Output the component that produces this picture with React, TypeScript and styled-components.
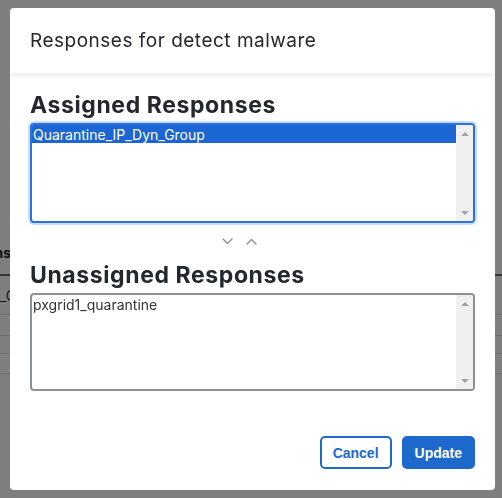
import React from 'react';
import styled, { createGlobalStyle } from 'styled-components';

const GlobalStyle = createGlobalStyle`
  html, body {
    margin: 0;
    padding: 0;
  }
  body {
    font-family: Inter, "Noto Sans", sans-serif;
    background: #ffffff;
  }
  * {
    box-sizing: border-box;
  }
`;

// page that sits behind the dialog
const Page = styled.div`
  width: 100vw;
  height: 100vh;
  overflow: hidden;
  padding-top: 236px;
`;

const TableHead = styled.div`
  display: flex;
  align-items: center;
  height: 40px;
  padding-bottom: 6px;
  border-bottom: 2px solid #666;
`;

const HeadCell = styled.div`
  width: 11px;
  display: flex;
  justify-content: flex-end;
  white-space: nowrap;
  font-size: 14px;
  font-weight: 700;
  color: #222;
`;

const TableRow = styled.div<{ $h: number }>`
  display: flex;
  align-items: center;
  height: ${(p) => p.$h}px;
  border-bottom: 1px solid #dcdcdc;
  font-size: 14px;
  color: #333;
  white-space: nowrap;
`;

const Overlay = styled.div`
  position: fixed;
  inset: 0;
  background: rgba(0, 0, 0, 0.5);
  display: flex;
  padding: 8px 7px 8px 10px;
`;

const Modal = styled.div`
  flex: 1;
  background: #fff;
  border-radius: 4px;
  display: flex;
  flex-direction: column;
  overflow: hidden;
`;

const Header = styled.div`
  position: relative;
  z-index: 1;
  height: 65px;
  padding: 0 20px;
  display: flex;
  align-items: center;
  font-size: 19px;
  letter-spacing: 0.5px;
  color: #23282e;
  box-shadow: 0 3px 6px rgba(0, 0, 0, 0.08);
`;

const Body = styled.div`
  flex: 1;
  display: flex;
  flex-direction: column;
  padding: 18px 20px 0;
`;

const SectionTitle = styled.h2`
  margin: 0 0 4px;
  font-size: 23px;
  line-height: 28px;
  letter-spacing: 0.6px;
  font-weight: 700;
  color: #23282e;
`;

const ListBox = styled.div<{ $focused?: boolean; $h: number }>`
  display: flex;
  height: ${(p) => p.$h}px;
  border: 2px solid ${(p) => (p.$focused ? '#2b72dc' : '#8b9199')};
  border-radius: 4px;
  overflow: hidden;
  box-shadow: ${(p) => (p.$focused ? '0 0 0 2px rgba(43, 114, 220, 0.25)' : 'none')};
  background: #fff;
`;

const Options = styled.div`
  flex: 1;
  display: flex;
  flex-direction: column;
`;

const Option = styled.div<{ $selected?: boolean }>`
  height: 18px;
  padding-left: 1px;
  display: flex;
  align-items: center;
  font-size: 14px;
  color: ${(p) => (p.$selected ? '#fff' : '#333')};
  background: ${(p) => (p.$selected ? '#1b66d2' : 'transparent')};
`;

const ScrollTrack = styled.div`
  width: 17px;
  background: #f0f0f0;
  display: flex;
  flex-direction: column;
  justify-content: space-between;
  align-items: center;
  padding: 7px 0 6px;
`;

const Arrow = styled.div<{ $up?: boolean }>`
  width: 0;
  height: 0;
  border-left: 4px solid transparent;
  border-right: 4px solid transparent;
  ${(p) => (p.$up ? 'border-bottom: 4px solid #a3a3a3;' : 'border-top: 4px solid #a3a3a3;')}
`;

const MoveRow = styled.div`
  height: 38px;
  display: flex;
  justify-content: center;
  align-items: center;
  gap: 13px;
  padding: 0 27px 2px 0;
`;

const MoveButton = styled.button`
  border: none;
  background: none;
  padding: 0;
  display: flex;
  cursor: pointer;
`;

const Footer = styled.div`
  display: flex;
  justify-content: flex-end;
  gap: 10px;
  padding: 0 20px 21px;
`;

const Button = styled.button<{ $primary?: boolean }>`
  height: 33px;
  padding: 0 11px;
  border-radius: 5px;
  border: 2px solid #1d69cc;
  background: ${(p) => (p.$primary ? '#1d69cc' : '#fff')};
  color: ${(p) => (p.$primary ? '#fff' : '#1d69cc')};
  font-family: "Liberation Sans", Arial, sans-serif;
  font-size: 14px;
  font-weight: 700;
  cursor: pointer;
`;

function Chevron({ up }: { up?: boolean }) {
  return (
    <svg width="11" height="7" viewBox="0 0 11 7" fill="none">
      <polyline
        points={up ? '1,6 5.5,1.5 10,6' : '1,1 5.5,5.5 10,1'}
        stroke="#8a9099"
        strokeWidth="1.4"
        strokeLinecap="round"
        strokeLinejoin="round"
      />
    </svg>
  );
}

function Scroll() {
  return (
    <ScrollTrack>
      <Arrow $up />
      <Arrow />
    </ScrollTrack>
  );
}

function App() {
  return (
    <>
      <GlobalStyle />
      <Page>
        <TableHead>
          <HeadCell>Actions</HeadCell>
        </TableHead>
        <TableRow $h={39}>_Cu</TableRow>
        <TableRow $h={21} />
        <TableRow $h={18} />
        <TableRow $h={20} />
      </Page>
      <Overlay>
        <Modal>
          <Header>Responses for detect malware</Header>
          <Body>
            <SectionTitle>Assigned Responses</SectionTitle>
            <ListBox $focused $h={100}>
              <Options>
                <Option $selected>Quarantine_IP_Dyn_Group</Option>
              </Options>
              <Scroll />
            </ListBox>
            <MoveRow>
              <MoveButton aria-label="Unassign">
                <Chevron />
              </MoveButton>
              <MoveButton aria-label="Assign">
                <Chevron up />
              </MoveButton>
            </MoveRow>
            <SectionTitle>Unassigned Responses</SectionTitle>
            <ListBox $h={98}>
              <Options>
                <Option>pxgrid1_quarantine</Option>
              </Options>
              <Scroll />
            </ListBox>
          </Body>
          <Footer>
            <Button>Cancel</Button>
            <Button $primary>Update</Button>
          </Footer>
        </Modal>
      </Overlay>
    </>
  );
}

export default App;
